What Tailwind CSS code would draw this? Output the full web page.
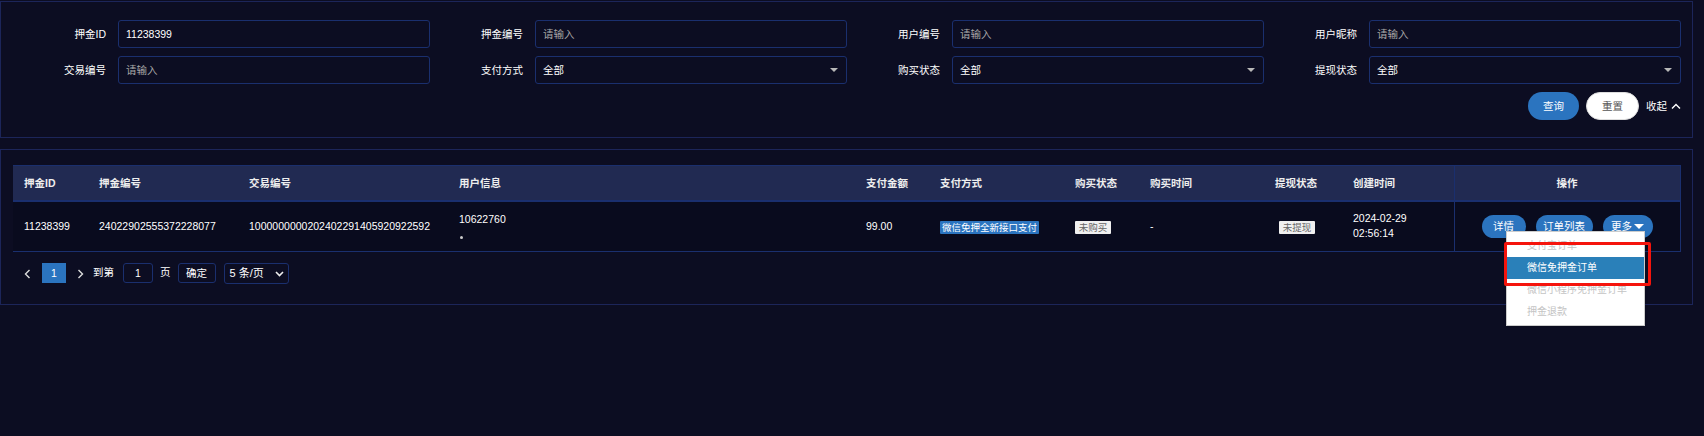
<!DOCTYPE html>
<html>
  <head>
    <meta charset="utf-8" />
    <title>押金订单</title>
    <script src="https://cdn.jsdelivr.net/npm/@tailwindcss/browser@4"></script>
  </head>

  <body class="relative h-[436px] w-[1704px] overflow-hidden bg-[#0c0d22] pt-px text-[10.5px] leading-none text-white font-['Liberation_Sans','Noto_Sans_CJK_SC',sans-serif]">
    <!-- FILTERS -->
    <section class="h-[137px] w-[1693px] border border-[#1c2559] pl-3 pr-[10px] pt-[18px]">
      <div class="grid grid-cols-[repeat(4,417px)] gap-y-2">
        <div class="flex items-center">
          <label class="w-[93px] text-right">押金ID</label>
          <input class="ml-3 h-7 w-[312px] rounded-[3px] border border-[#1a2f6e] bg-transparent px-[7px] text-white outline-none" value="11238399" />
        </div>
        <div class="flex items-center">
          <label class="w-[93px] text-right">押金编号</label>
          <input class="ml-3 h-7 w-[312px] rounded-[3px] border border-[#1a2f6e] bg-transparent px-[7px] outline-none placeholder:text-[#a8a8a8]" placeholder="请输入" />
        </div>
        <div class="flex items-center">
          <label class="w-[93px] text-right">用户编号</label>
          <input class="ml-3 h-7 w-[312px] rounded-[3px] border border-[#1a2f6e] bg-transparent px-[7px] outline-none placeholder:text-[#a8a8a8]" placeholder="请输入" />
        </div>
        <div class="flex items-center">
          <label class="w-[93px] text-right">用户昵称</label>
          <input class="ml-3 h-7 w-[312px] rounded-[3px] border border-[#1a2f6e] bg-transparent px-[7px] outline-none placeholder:text-[#a8a8a8]" placeholder="请输入" />
        </div>
        <div class="flex items-center">
          <label class="w-[93px] text-right">交易编号</label>
          <input class="ml-3 h-7 w-[312px] rounded-[3px] border border-[#1a2f6e] bg-transparent px-[7px] outline-none placeholder:text-[#a8a8a8]" placeholder="请输入" />
        </div>
        <div class="flex items-center">
          <label class="w-[93px] text-right">支付方式</label>
          <div class="ml-3 flex h-7 w-[312px] items-center justify-between rounded-[3px] border border-[#1a2f6e] pl-[7px] pr-2">
            <span>全部</span>
            <span class="h-0 w-0 border-x-4 border-t-[4px] border-x-transparent border-t-[#b8b8b8]"></span>
          </div>
        </div>
        <div class="flex items-center">
          <label class="w-[93px] text-right">购买状态</label>
          <div class="ml-3 flex h-7 w-[312px] items-center justify-between rounded-[3px] border border-[#1a2f6e] pl-[7px] pr-2">
            <span>全部</span>
            <span class="h-0 w-0 border-x-4 border-t-[4px] border-x-transparent border-t-[#b8b8b8]"></span>
          </div>
        </div>
        <div class="flex items-center">
          <label class="w-[93px] text-right">提现状态</label>
          <div class="ml-3 flex h-7 w-[312px] items-center justify-between rounded-[3px] border border-[#1a2f6e] pl-[7px] pr-2">
            <span>全部</span>
            <span class="h-0 w-0 border-x-4 border-t-[4px] border-x-transparent border-t-[#b8b8b8]"></span>
          </div>
        </div>
      </div>
      <div class="mt-2 flex items-center justify-end">
        <button class="h-7 w-[51px] rounded-full bg-[#2b74bf] text-white">查询</button>
        <button class="ml-[7px] h-7 w-[53px] rounded-full border border-[#ddd] bg-white text-[#555]">重置</button>
        <span class="ml-[7px]">收起</span>
        <svg class="ml-1 mr-px" width="10" height="6" viewBox="0 0 10 6" fill="none" stroke="#fff" stroke-width="1.4"><path d="M1 5.5 5 1.5 9 5.5" /></svg>
      </div>
    </section>

    <!-- TABLE -->
    <section class="mt-[11px] h-[156px] w-[1693px] border border-[#1c2559] pl-3 pt-[15px]">
      <table class="w-[1667px] table-fixed border-collapse text-left">
        <colgroup>
          <col class="w-[75px]" /><col class="w-[150px]" /><col class="w-[210px]" /><col class="w-[407px]" /><col class="w-[74px]" /><col class="w-[135px]" /><col class="w-[75px]" /><col class="w-[125px]" /><col class="w-[78px]" /><col class="w-[112px]" /><col class="w-[226px]" />
        </colgroup>
        <thead>
          <tr class="h-[35px] border-t border-b-2 border-[#1a2f6e] bg-[#212a52] text-[#eee]">
            <th class="pl-[11px] font-semibold">押金ID</th>
            <th class="pl-[11px] font-semibold">押金编号</th>
            <th class="pl-[11px] font-semibold">交易编号</th>
            <th class="pl-[11px] font-semibold">用户信息</th>
            <th class="pl-[11px] font-semibold">支付金额</th>
            <th class="pl-[11px] font-semibold">支付方式</th>
            <th class="pl-[11px] font-semibold">购买状态</th>
            <th class="pl-[11px] font-semibold">购买时间</th>
            <th class="pl-[11px] font-semibold">提现状态</th>
            <th class="pl-[11px] font-semibold">创建时间</th>
            <th class="border-x border-[#1a2f6e] text-center font-semibold">操作</th>
          </tr>
        </thead>
        <tbody>
          <tr class="h-[51px] border-b border-[#1a2f6e] bg-[#090b1e]">
            <td class="pl-[11px]">11238399</td>
            <td class="pl-[11px]">24022902555372228077</td>
            <td class="pl-[11px]">1000000000202402291405920922592</td>
            <td class="pl-[11px]">
              <div>10622760</div>
              <div class="ml-px mt-[11px] h-[3px] w-[3px] rounded-full bg-[#ccc]"></div>
            </td>
            <td class="pl-[11px]">99.00</td>
            <td class="pl-[11px]"><span class="mt-[3px] inline-block h-[13px] w-[99px] rounded-[1px] bg-[#2b74bf] text-center text-[9.5px] leading-[13px] whitespace-nowrap">微信免押全新接口支付</span></td>
            <td class="pl-[11px]"><span class="mt-[3px] inline-block h-[13px] w-9 rounded-[1px] bg-[#f0f0f0] text-center text-[9.5px] leading-[13px] text-[#666]">未购买</span></td>
            <td class="pl-[11px]">-</td>
            <td class="pl-[15px]"><span class="mt-[3px] inline-block h-[13px] w-9 rounded-[1px] bg-[#f0f0f0] text-center text-[9.5px] leading-[13px] text-[#666]">未提现</span></td>
            <td class="pl-[11px] leading-[15px]">2024-02-29<br />02:56:14</td>
            <td class="border-x border-[#1a2f6e] pl-[27px]">
              <div class="flex gap-[10px]">
                <button class="h-[23px] w-11 rounded-full bg-[#2b74bf]">详情</button>
                <button class="h-[23px] w-[57px] rounded-full bg-[#2b74bf]">订单列表</button>
                <button class="flex h-[23px] w-[50px] items-center justify-center gap-[2px] rounded-full bg-[#2b74bf]">更多<span class="h-0 w-0 border-x-[5px] border-t-[5px] border-x-transparent border-t-white"></span></button>
              </div>
            </td>
          </tr>
        </tbody>
      </table>

      <!-- PAGINATION -->
      <div class="mt-[11px] flex h-5 items-start">
        <svg class="ml-[11px] mt-[6px]" width="7" height="10" viewBox="0 0 7 10" fill="none" stroke="#ddd" stroke-width="1.4"><path d="M5.5 1 1.5 5 5.5 9" /></svg>
        <span class="ml-[11px] flex h-5 w-6 items-center justify-center bg-[#2b74bf]">1</span>
        <svg class="ml-[11px] mt-[6px]" width="7" height="10" viewBox="0 0 7 10" fill="none" stroke="#ddd" stroke-width="1.4"><path d="M1.5 1 5.5 5 1.5 9" /></svg>
        <span class="ml-[9px] mt-1">到第</span>
        <span class="ml-[9px] flex h-5 w-[30px] items-center justify-center rounded-[3px] border border-[#1a2f6e]">1</span>
        <span class="ml-[7px] mt-1">页</span>
        <button class="ml-[7px] h-5 w-[38px] rounded-[3px] border border-[#1a2f6e]">确定</button>
        <div class="ml-2 flex h-[21px] w-[65px] items-center justify-between rounded-[3px] border border-[#1a2f6e] pl-[5px] pr-[4px]">
          <span class="text-[11px]">5 条/页</span>
          <svg width="9" height="6" viewBox="0 0 9 6" fill="none" stroke="#eee" stroke-width="1.6"><path d="M1 1 4.5 4.5 8 1" /></svg>
        </div>
      </div>
    </section>

    <!-- MORE MENU -->
    <ul class="absolute left-[1506px] top-[231px] h-[95px] w-[139px] border border-[#ccc] bg-white pt-[3px] text-[10px] text-[#c4c4c4] shadow">
      <li class="flex h-[22px] items-center pl-5">支付宝订单</li>
      <li class="flex h-[22px] items-center bg-[#2a80b9] pl-5 text-white">微信免押金订单</li>
      <li class="flex h-[22px] items-center pl-5">微信小程序免押金订单</li>
      <li class="flex h-[22px] items-center pl-5">押金退款</li>
    </ul>
    <!-- annotation -->
    <div class="absolute left-[1504px] top-[242px] h-[44px] w-[147px] rounded-[2px] border-[3px] border-[#f5140c]"></div>
  </body>
</html>
